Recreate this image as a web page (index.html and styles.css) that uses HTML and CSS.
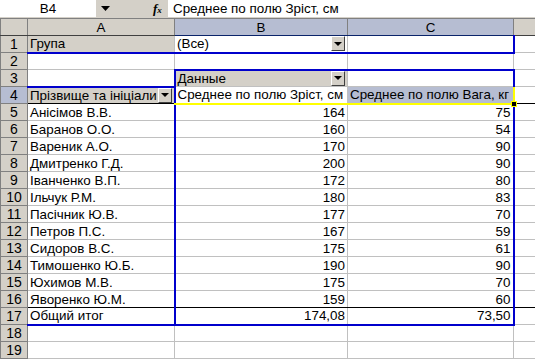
FILE: index.html
```html
<!doctype html>
<html lang="uk">
    <head>
        <meta charset="UTF-8" />
        <title>Зведена таблиця</title>
        <link rel="stylesheet" href="styles.css">
    </head>
    <body>
        <div class="formulaBar">
            <div class="nameBox">B4</div>
            <div class="barTools">
                <svg class="nameArrow" width="9" height="5" viewBox="0 0 9 5"><path d="M0 0h9L4.5 5z" fill="#000"/></svg>
                <span class="fx">f<small>x</small></span>
            </div>
            <div class="formula">Среднее по полю Зріст, см</div>
        </div>
        <table class="sheet">
            <colgroup>
                <col class="colRh" />
                <col class="colA" />
                <col class="colB" />
                <col class="colC" />
                <col class="colD" />
            </colgroup>
            <tr class="hdrRow">
                <th class="corner"></th>
                <th>A</th>
                <th class="hdrSel">B</th>
                <th class="hdrSel">C</th>
                <th></th>
            </tr>
            <tr>
                <th class="rh">1</th>
                <td class="field pageBottom">Група</td>
                <td class="pageBottom"><div class="pick"><span>(Все)</span><span class="dropBtn"></span></div></td>
                <td class="pageBottom blueRight"></td>
                <td></td>
            </tr>
            <tr>
                <th class="rh">2</th>
                <td></td><td></td><td></td><td></td>
            </tr>
            <tr>
                <th class="rh">3</th>
                <td></td>
                <td class="field blueTop blueLeft"><div class="pick"><span>Данные</span><span class="dropBtn"></span></div></td>
                <td class="blueTop blueRight"></td>
                <td></td>
            </tr>
            <tr class="headRow">
                <th class="rh rhSel">4</th>
                <td class="field blueTop"><div class="pick"><span>Прізвище та ініціали</span><span class="dropBtn"></span></div></td>
                <td class="activeCell">Среднее по полю Зріст, см</td>
                <td class="selCell">Среднее по полю Вага, кг<span class="fillHandle"></span></td>
                <td></td>
            </tr>
            <tr><th class="rh">5</th><td>Анісімов В.В.</td><td class="num blueLeft">164</td><td class="num blueRight">75</td><td></td></tr>
            <tr><th class="rh">6</th><td>Баранов О.О.</td><td class="num blueLeft">160</td><td class="num blueRight">54</td><td></td></tr>
            <tr><th class="rh">7</th><td>Вареник А.О.</td><td class="num blueLeft">170</td><td class="num blueRight">90</td><td></td></tr>
            <tr><th class="rh">8</th><td>Дмитренко Г.Д.</td><td class="num blueLeft">200</td><td class="num blueRight">90</td><td></td></tr>
            <tr><th class="rh">9</th><td>Іванченко В.П.</td><td class="num blueLeft">172</td><td class="num blueRight">80</td><td></td></tr>
            <tr><th class="rh">10</th><td>Ільчук Р.М.</td><td class="num blueLeft">180</td><td class="num blueRight">83</td><td></td></tr>
            <tr><th class="rh">11</th><td>Пасічник Ю.В.</td><td class="num blueLeft">177</td><td class="num blueRight">70</td><td></td></tr>
            <tr><th class="rh">12</th><td>Петров П.С.</td><td class="num blueLeft">167</td><td class="num blueRight">59</td><td></td></tr>
            <tr><th class="rh">13</th><td>Сидоров В.С.</td><td class="num blueLeft">175</td><td class="num blueRight">61</td><td></td></tr>
            <tr><th class="rh">14</th><td>Тимошенко Ю.Б.</td><td class="num blueLeft">190</td><td class="num blueRight">90</td><td></td></tr>
            <tr><th class="rh">15</th><td>Юхимов М.В.</td><td class="num blueLeft">175</td><td class="num blueRight">70</td><td></td></tr>
            <tr class="lastData"><th class="rh">16</th><td>Яворенко Ю.М.</td><td class="num blueLeft">159</td><td class="num blueRight">60</td><td></td></tr>
            <tr class="totalRow"><th class="rh">17</th><td>Общий итог</td><td class="num blueLeft">174,08</td><td class="num blueRight">73,50</td><td></td></tr>
            <tr><th class="rh">18</th><td></td><td></td><td></td><td></td></tr>
            <tr><th class="rh">19</th><td></td><td></td><td></td><td></td></tr>
        </table>
    </body>
</html>
```

FILE: styles.css
```css
body {
    margin: 0;
    background: #fff;
    color: #000;
    font-family: "Liberation Sans", Arial, sans-serif;
    font-size: 13.4px;
    overflow: hidden;
}
.formulaBar {
    display: flex;
    height: 17px;
    border-bottom: 1px solid #d4d0c8;
}
.nameBox {
    width: 96px;
    text-align: center;
    line-height: 17px;
}
.barTools {
    width: 72px;
    background: #d4d0c8;
    display: flex;
    align-items: center;
}
.nameArrow {
    margin-left: 5px;
}
.fx {
    margin-left: 43px;
    font-family: "Liberation Serif", serif;
    font-style: italic;
    font-weight: bold;
    font-size: 13px;
}
.fx small {
    font-size: 9px;
}
.formula {
    flex: 1;
    padding-left: 5px;
    line-height: 17px;
}
.sheet {
    border-collapse: collapse;
    table-layout: fixed;
    width: 536px;
}
.colRh { width: 27px; }
.colA { width: 147px; }
.colB { width: 173px; }
.colC { width: 166px; }
.colD { width: 23px; }
tr {
    height: 17px;
}
td, th {
    padding: 0 2px;
    border: 1px solid #c0c0c0;
    white-space: nowrap;
    overflow: hidden;
    line-height: 15px;
    font-weight: normal;
    text-align: left;
    position: relative;
}
th {
    background: #d4d0c8;
    border-color: #808080;
    text-align: center;
}
.hdrSel, .rhSel {
    background: #b6bdd2;
}
.hdrRow th {
    border-bottom-color: #404040;
}
.hdrRow .hdrSel {
    border-bottom-color: #0a246a;
}
.rh {
    font-size: 14px;
}
.field {
    background: #d4d0c8;
}
.num {
    text-align: right;
}
.pick {
    display: flex;
    justify-content: space-between;
    align-items: center;
}
.dropBtn {
    width: 12px;
    height: 13px;
    background: #d4d0c8;
    border: 1px solid;
    border-color: #fff #404040 #404040 #fff;
    display: flex;
    justify-content: center;
    align-items: center;
}
.dropBtn::after {
    content: "";
    border-left: 4px solid transparent;
    border-right: 4px solid transparent;
    border-top: 4px solid #000;
}
.pageBottom {
    border-bottom: 2px solid #0000cc;
}
.blueTop {
    border-top: 2px solid #0000cc;
}
.blueLeft {
    border-left: 2px solid #0000cc;
}
.blueRight {
    border-right: 2px solid #0000cc;
}
.headRow td {
    border-bottom: 1px solid #000;
}
.activeCell {
    border-left: 2px solid #0000cc;
    border-bottom: 2px solid #ffff00 !important;
}
.selCell {
    background: #b6bdd2;
    border-right: 2px solid #ffff00;
    border-bottom: 2px solid #ffff00 !important;
    overflow: visible;
}
.fillHandle {
    position: absolute;
    right: -4px;
    bottom: -4px;
    width: 4px;
    height: 4px;
    background: #000;
    border: 1px solid #ffff00;
}
.lastData td {
    border-bottom: 1px solid #000;
}
.totalRow td {
    border-bottom: 2px solid #0000cc;
}
.totalRow td:last-child {
    border-bottom: 1px solid #c0c0c0;
}
```
